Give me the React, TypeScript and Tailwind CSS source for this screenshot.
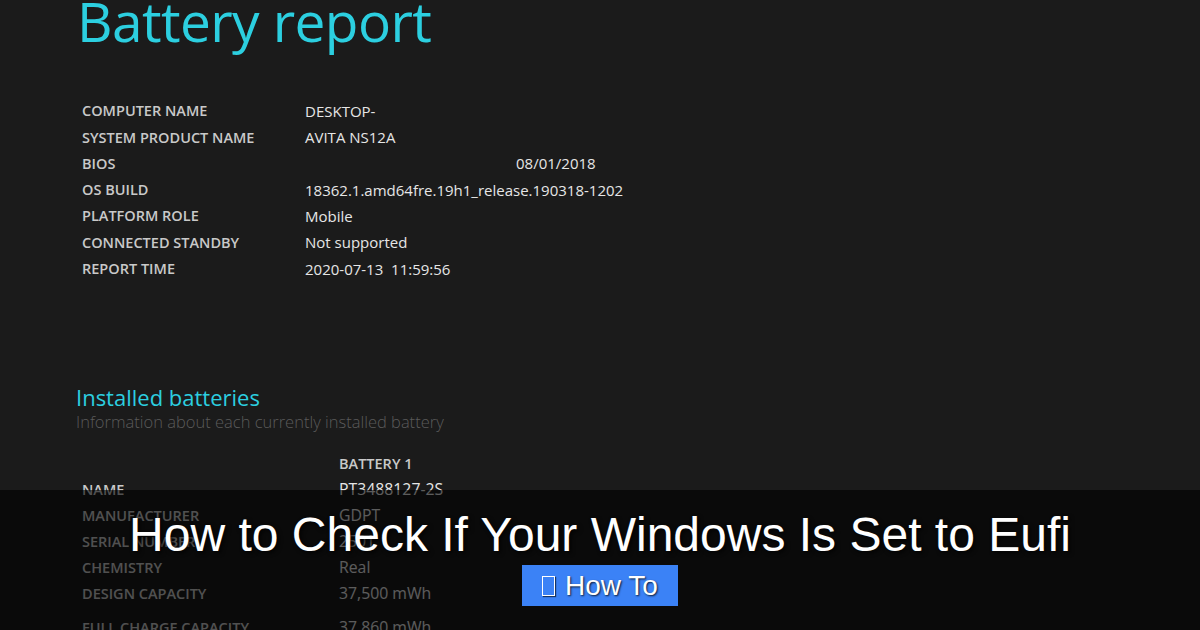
import React from "react";

const rows: [string, string, string?][] = [
  ["COMPUTER NAME", "DESKTOP-"],
  ["SYSTEM PRODUCT NAME", "AVITA NS12A"],
  ["BIOS", "08/01/2018", "pl-[211px]"],
  ["OS BUILD", "18362.1.amd64fre.19h1_release.190318-1202"],
  ["PLATFORM ROLE", "Mobile"],
  ["CONNECTED STANDBY", "Not supported"],
  ["REPORT TIME", "2020-07-13\u00a0\u00a011:59:56"],
];

const batt: [string, string][] = [
  ["NAME", "PT3488127-2S"],
  ["MANUFACTURER", "GDPT"],
  ["SERIAL NUMBER", "2501"],
  ["CHEMISTRY", "Real"],
  ["DESIGN CAPACITY", "37,500 mWh"],
];

export default function App() {
  const seg = { fontFamily: '"Open Sans", "Noto Sans", sans-serif' };
  return (
    <div
      className="relative w-[1200px] h-[630px] overflow-hidden bg-[#1b1b1b]"
      style={seg}
    >
      <div className="pl-[76px]">
        <h1 className="text-[55px] leading-none font-normal text-[#2ccfe0] tracking-[-0.6px] -mt-[7px] h-[105px] pl-[1px]">
          Battery report
        </h1>
        <div className="pl-[6px] flex flex-col">
          {rows.map(([k, v, pad]) => (
            <div key={k} className="flex items-center h-[26.3px]">
              <div className="w-[223px] text-[14.5px] font-semibold text-[#c9c9c9]">
                {k}
              </div>
              <div className={`text-[15px] text-[#e6e6e6] ${pad ?? ""}`}>{v}</div>
            </div>
          ))}
        </div>
        <div className="mt-[101px]">
          <div className="text-[22px] leading-[28px] text-[#2ccfe0]">Installed batteries</div>
          <div className="text-[16.5px] leading-[22px] text-[#5a5a5a] font-light">
            Information about each currently installed battery
          </div>
        </div>
        <div className="pl-[6px] mt-[18px] flex flex-col">
          <div className="flex items-center h-[26px]">
            <div className="w-[257px]" />
            <div className="text-[14.5px] font-semibold text-[#c9c9c9]">BATTERY 1</div>
          </div>
          {batt.map(([k, v]) => (
            <div key={k} className="flex items-center h-[26px]">
              <div className="w-[257px] text-[14.5px] font-semibold text-[#c9c9c9]">{k}</div>
              <div className="text-[15.8px] text-[#e6e6e6]">{v}</div>
            </div>
          ))}
          <div className="flex items-center h-[26px] mt-[8px]">
            <div className="w-[257px] text-[14.5px] font-semibold text-[#c9c9c9]">FULL CHARGE CAPACITY</div>
            <div className="text-[15.8px] text-[#e6e6e6]">37,860 mWh</div>
          </div>
        </div>
      </div>

      <div
        className="absolute left-0 right-0 bottom-0 h-[140px] bg-black/60 flex flex-col items-center pt-[17px]"
        style={{ fontFamily: '"Liberation Sans", Arial, sans-serif' }}
      >
        <div className="text-[48px] leading-[56px] text-white [text-shadow:2px_2px_4px_rgba(0,0,0,0.8)]">
          How to Check If Your Windows Is Set to Eufi
        </div>
        <div className="mt-[2px] h-[41px] px-[20px] bg-[#3b82f6] flex items-center gap-[10px] text-white text-[28px] [text-shadow:1px_1px_2px_rgba(0,0,0,0.8)]">
          <span className="inline-block w-[13px] h-[20px] border border-white shadow-[1px_1px_1px_rgba(0,0,0,0.6)]" />
          <span className="leading-none">How To</span>
        </div>
      </div>
    </div>
  );
}
